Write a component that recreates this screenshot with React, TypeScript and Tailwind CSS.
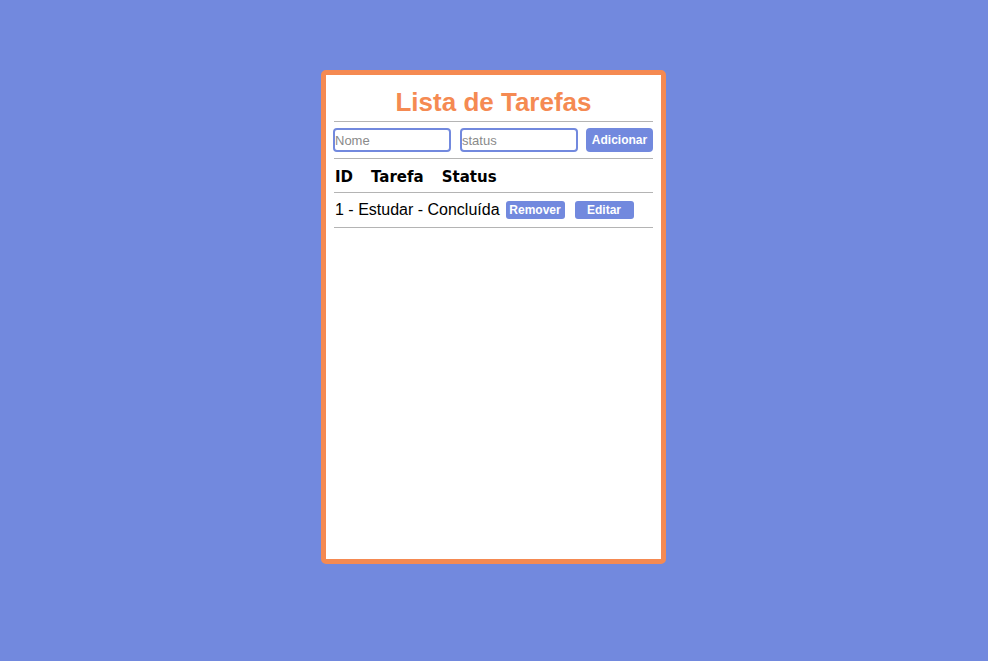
import { useState } from 'react'

type Task = { id: number; nome: string; status: string }

export default function App() {
  const [tasks] = useState<Task[]>([{ id: 1, nome: 'Estudar', status: 'Concluída' }])
  const [nome, setNome] = useState('')
  const [status, setStatus] = useState('')

  return (
    <div
      className="min-h-screen w-full bg-[#7289de] flex justify-center pt-[70px] pr-[1px]"
      style={{ fontFamily: '"Comic Sans MS", "Liberation Sans", sans-serif' }}
    >
      <div className="w-[345px] h-[494px] bg-white border-[5px] border-[#f58a52] rounded-[5px] px-2">
        {/* Title */}
        <h1 className="pt-[12px] text-center text-[26px] leading-[30px] font-bold text-[#f58a52]">
          Lista de Tarefas
        </h1>
        <div className="mt-1 h-px bg-[#b4b4b4]" />

        {/* Form */}
        <div className="mt-[6px] flex items-center">
          <input
            value={nome}
            onChange={(e) => setNome(e.target.value)}
            placeholder="Nome"
            className="-ml-px w-[118px] h-[24px] border-2 border-[#7289de] rounded-[4px] px-0 text-[13px] text-gray-800 placeholder-[#8a8a8a] outline-none"
          />
          <input
            value={status}
            onChange={(e) => setStatus(e.target.value)}
            placeholder="status"
            className="ml-[9px] w-[118px] h-[24px] border-2 border-[#7289de] rounded-[4px] px-0 text-[13px] text-gray-800 placeholder-[#8a8a8a] outline-none"
          />
          <button className="ml-[8px] w-[69px] h-[24px] bg-[#7289de] rounded-[4px] text-white text-[12px] font-bold">
            Adicionar
          </button>
        </div>
        <div className="mt-[6px] h-px bg-[#b4b4b4]" />

        {/* Header */}
        <div
          className="h-[33px] pt-[3px] pl-[1px] flex items-center gap-[18px] text-[15px] font-bold text-black"
          style={{ fontFamily: '"DejaVu Sans", sans-serif' }}
        >
          <span>ID</span>
          <span>Tarefa</span>
          <span>Status</span>
        </div>
        <div className="h-px bg-[#b4b4b4]" />

        {/* Rows */}
        {tasks.map((t) => (
          <div key={t.id}>
            <div className="h-[34px] pl-[1px] flex items-center text-[16px] text-black">
              <span>
                {t.id} - {t.nome} - {t.status}
              </span>
              <button className="ml-[6px] w-[59px] h-[18px] bg-[#7289de] rounded-[3px] text-white text-[12px] font-bold leading-none">
                Remover
              </button>
              <button className="ml-[10px] w-[59px] h-[18px] bg-[#7289de] rounded-[3px] text-white text-[12px] font-bold leading-none">
                Editar
              </button>
            </div>
            <div className="h-px bg-[#b4b4b4]" />
          </div>
        ))}
      </div>
    </div>
  )
}
